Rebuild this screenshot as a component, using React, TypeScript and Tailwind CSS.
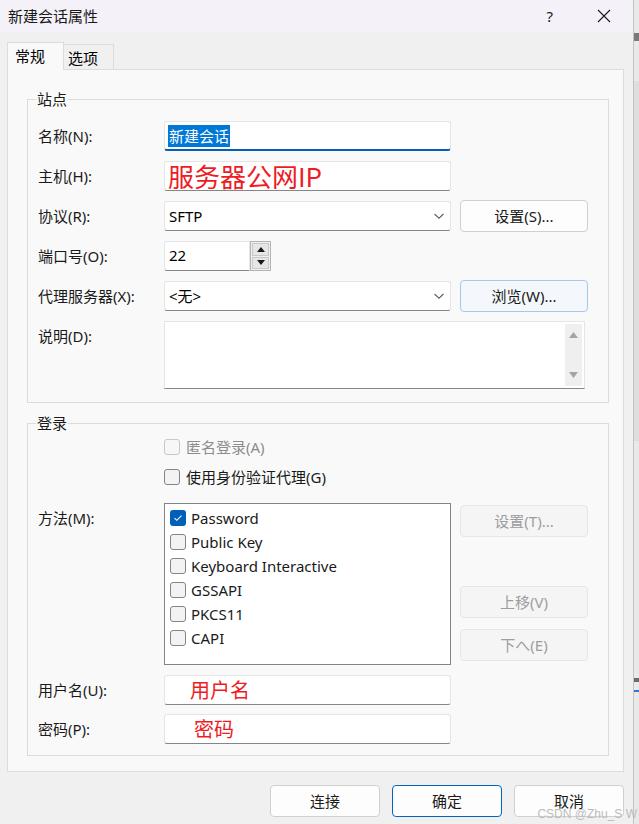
import React from 'react'

function TextBox({ children, className = '', focused = false }: { children?: React.ReactNode; className?: string; focused?: boolean }) {
  return (
    <div
      className={`h-[30px] bg-white border border-[#e5e5e5] rounded-[3px] flex items-center ${
        focused ? 'border-b-2 border-b-[#005fb8]' : 'border-b-[#868686]'
      } ${className}`}
    >
      {children}
    </div>
  )
}

function Chevron() {
  return (
    <svg width="12" height="8" viewBox="0 0 12 8" className="ml-auto mr-[5px]">
      <path d="M1.5 2L6 6.2L10.5 2" fill="none" stroke="#606060" strokeWidth="1.1" />
    </svg>
  )
}

function Btn({ children, disabled = false, variant = '' }: { children: React.ReactNode; disabled?: boolean; variant?: string }) {
  let cls = 'border-[#d0d0d0] bg-[#fdfdfd] text-[#1a1a1a]'
  if (disabled) cls = 'border-[#e6e6e6] bg-[#f5f5f5] text-[#9d9d9d]'
  if (variant === 'hover') cls = 'border-[#a8c6e6] bg-[#f4f8fc] text-[#1a1a1a]'
  if (variant === 'primary') cls = 'border-[#0067c0] bg-[#fdfdfd] text-[#1a1a1a]'
  return (
    <div className={`h-[32px] rounded-[4px] border flex items-center justify-center text-[15px] ${cls}`}>
      {children}
    </div>
  )
}

function Check({ checked = false, disabled = false }: { checked?: boolean; disabled?: boolean }) {
  if (checked) {
    return (
      <div className="w-[16px] h-[16px] rounded-[3px] bg-[#005fb8] flex items-center justify-center shrink-0">
        <svg width="10" height="8" viewBox="0 0 10 8">
          <path d="M1.5 4.2L3.8 6.3L8.5 1.6" fill="none" stroke="white" strokeWidth="1.1" />
        </svg>
      </div>
    )
  }
  return (
    <div
      className={`w-[16px] h-[16px] rounded-[3px] border shrink-0 ${
        disabled ? 'border-[#c8c8c8] bg-[#f7f7f7]' : 'border-[#858585] bg-[#f3f3f3]'
      }`}
    />
  )
}

function Label({ children, top = false }: { children: React.ReactNode; top?: boolean }) {
  return (
    <div className={`w-[126px] shrink-0 text-[15px] text-[#1a1a1a] ${top ? 'self-start pt-[5px]' : ''}`}>{children}</div>
  )
}

export default function App() {
  const methods = [
    { name: 'Password', checked: true },
    { name: 'Public Key', checked: false },
    { name: 'Keyboard Interactive', checked: false },
    { name: 'GSSAPI', checked: false },
    { name: 'PKCS11', checked: false },
    { name: 'CAPI', checked: false },
  ]

  return (
    <div className="w-[639px] h-[824px] flex font-['Noto_Sans','Noto_Sans_CJK_SC',sans-serif] leading-[20px] overflow-hidden">
      {/* Dialog */}
      <div className="w-[633px] h-[824px] bg-[#f0f0f0] flex flex-col relative">
        {/* Title bar */}
        <div className="h-[32px] bg-[#f4f1f8] flex items-center pl-[8px] shrink-0 rounded-tr-[6px]">
          <span className="text-[15px] text-[#1a1a1a]">新建会话属性</span>
          <span className="ml-auto text-[15px] text-[#1a1a1a] mr-[44px]">?</span>
          <svg width="14" height="14" viewBox="0 0 14 14" className="mr-[22px]">
            <path d="M1 1L13 13M13 1L1 13" stroke="#1a1a1a" strokeWidth="1.1" />
          </svg>
        </div>

        {/* Tabs */}
        <div className="flex items-end pl-[7px] pt-[10px] shrink-0">
          <div className="w-[57px] h-[28px] border border-b-0 border-[#dcdcdc] bg-[#f9f9f9] text-[15px] pl-[7px] pt-[3px] relative z-10 -mb-px">
            常规
          </div>
          <div className="w-[50px] h-[25px] border border-l-0 border-b-0 border-[#dcdcdc] bg-[#f0f0f0] text-[15px] pl-[4px] pt-[3px]">
            选项
          </div>
        </div>

        {/* Panel */}
        <div className="ml-[7px] w-[617px] border border-[#dcdcdc] bg-[#f9f9f9] pl-[19px] pt-[29px] pb-[15px] shrink-0">
          {/* 站点 */}
          <div className="relative w-[582px] border border-[#dcdcdc] pl-[10px] pt-[16px] pb-[13px]">
            <span className="absolute left-[8px] top-[-11px] px-[1px] bg-[#f9f9f9] text-[15px] text-[#1a1a1a]">站点</span>

            <div className="h-[40px] flex items-center">
              <Label>名称(N):</Label>
              <TextBox focused className="w-[287px] pl-[3px]">
                <span className="bg-[#0078d7] text-white text-[15px] leading-[22px] px-[1px]">新建会话</span>
              </TextBox>
            </div>

            <div className="h-[40px] flex items-center">
              <Label>主机(H):</Label>
              <TextBox className="w-[287px] pl-[3px]">
                <span className="text-[#ee1c25] text-[26px] leading-[28px] whitespace-nowrap font-['Noto_Sans_CJK_SC',sans-serif]">服务器公网IP</span>
              </TextBox>
            </div>

            <div className="h-[40px] flex items-center">
              <Label>协议(R):</Label>
              <TextBox className="w-[287px] pl-[4px]">
                <span className="text-[15px]">SFTP</span>
                <Chevron />
              </TextBox>
              <div className="w-[128px] ml-[9px]">
                <Btn>设置(S)...</Btn>
              </div>
            </div>

            <div className="h-[40px] flex items-center">
              <Label>端口号(O):</Label>
              <TextBox className="w-[86px] pl-[4px] rounded-r-none">
                <span className="text-[15px] -mt-[2px]">22</span>
              </TextBox>
              <div className="w-[21px] h-[30px] border border-[#b4b4b4] bg-[#f0f0f0] flex flex-col p-[1px] gap-[1px]">
                <div className="flex-1 bg-[#e6e6e6] border border-[#c9c9c9] flex items-center justify-center">
                  <svg width="8" height="5" viewBox="0 0 8 5"><path d="M0 5L4 0L8 5Z" fill="#1a1a1a" /></svg>
                </div>
                <div className="flex-1 bg-[#e6e6e6] border border-[#c9c9c9] flex items-center justify-center">
                  <svg width="8" height="5" viewBox="0 0 8 5"><path d="M0 0L4 5L8 0Z" fill="#1a1a1a" /></svg>
                </div>
              </div>
            </div>

            <div className="h-[40px] flex items-center">
              <Label>代理服务器(X):</Label>
              <TextBox className="w-[287px] pl-[4px]">
                <span className="text-[15px]">&lt;无&gt;</span>
                <Chevron />
              </TextBox>
              <div className="w-[128px] ml-[9px]">
                <Btn variant="hover">浏览(W)...</Btn>
              </div>
            </div>

            <div className="flex mt-[5px]">
              <Label top>说明(D):</Label>
              <div className="w-[421px] h-[68px] bg-white border border-[#e5e5e5] border-b-[#868686] flex justify-end p-[2px]">
                <div className="w-[17px] h-full bg-[#efefef] flex flex-col items-center justify-between py-[8px]">
                  <svg width="9" height="6" viewBox="0 0 9 6"><path d="M0 6L4.5 0L9 6Z" fill="#a3a3a3" /></svg>
                  <svg width="9" height="6" viewBox="0 0 9 6"><path d="M0 0L4.5 6L9 0Z" fill="#a3a3a3" /></svg>
                </div>
              </div>
            </div>
          </div>

          {/* 登录 */}
          <div className="relative w-[582px] border border-[#dcdcdc] mt-[20px] pl-[10px] pt-[8px] pb-[11px]">
            <span className="absolute left-[8px] top-[-11px] px-[1px] bg-[#f9f9f9] text-[15px] text-[#1a1a1a]">登录</span>

            <div className="h-[30px] flex items-center pl-[126px] gap-[6px]">
              <Check disabled />
              <span className="text-[15px] text-[#8c8c8c]">匿名登录(A)</span>
            </div>
            <div className="h-[30px] flex items-center pl-[126px] gap-[6px]">
              <Check />
              <span className="text-[15px] text-[#1a1a1a]">使用身份验证代理(G)</span>
            </div>

            <div className="flex mt-[11px]">
              <Label top>方法(M):</Label>
              <div className="w-[287px] h-[162px] bg-white border border-[#838383] pt-[2px] pl-[5px]">
                {methods.map((m) => (
                  <div key={m.name} className="h-[24px] flex items-center gap-[5px]">
                    <Check checked={m.checked} />
                    <span className="text-[15px] text-[#1a1a1a]">{m.name}</span>
                  </div>
                ))}
              </div>
              <div className="w-[128px] ml-[9px] flex flex-col">
                <div className="mt-[2px]">
                  <Btn disabled>设置(T)...</Btn>
                </div>
                <div className="mt-[49px]">
                  <Btn disabled>上移(V)</Btn>
                </div>
                <div className="mt-[11px]">
                  <Btn disabled>下へ(E)</Btn>
                </div>
              </div>
            </div>

            <div className="flex items-center mt-[10px]">
              <Label>用户名(U):</Label>
              <TextBox className="w-[287px] pl-[25px]">
                <span className="text-[#ee1c25] text-[20px] font-['Noto_Sans_CJK_SC',sans-serif]">用户名</span>
              </TextBox>
            </div>
            <div className="flex items-center mt-[9px]">
              <Label>密码(P):</Label>
              <TextBox className="w-[287px] pl-[29px]">
                <span className="text-[#ee1c25] text-[20px] font-['Noto_Sans_CJK_SC',sans-serif]">密码</span>
              </TextBox>
            </div>
          </div>
        </div>

        {/* Footer */}
        <div className="flex justify-end gap-[12px] pr-[9px] mt-[13px]">
          <div className="w-[110px]">
            <Btn>连接</Btn>
          </div>
          <div className="w-[110px]">
            <Btn variant="primary">确定</Btn>
          </div>
          <div className="w-[110px]">
            <Btn>取消</Btn>
          </div>
        </div>

        <span className="absolute right-[-4px] bottom-[3px] text-[12px] leading-[14px] text-[#bcbcbc] font-['Liberation_Sans',sans-serif]">
          CSDN @Zhu_S W
        </span>
      </div>

      {/* Neighbouring window strip */}
      <div className="w-[6px] h-[824px] border-l border-[#c4c4c4] bg-[#e9e9e9] flex flex-col">
        <div className="h-[33px]" />
        <div className="h-[8px] bg-[#7a7a7a]" />
        <div className="h-[40px]" />
        <div className="h-[360px] bg-[#dedede]" />
        <div className="h-[237px]" />
        <div className="h-[4px] bg-[#6b6b6b]" />
        <div className="h-[8px]" />
        <div className="h-[2px] bg-[#2b7bd0]" />
        <div className="flex-1" />
      </div>
    </div>
  )
}
